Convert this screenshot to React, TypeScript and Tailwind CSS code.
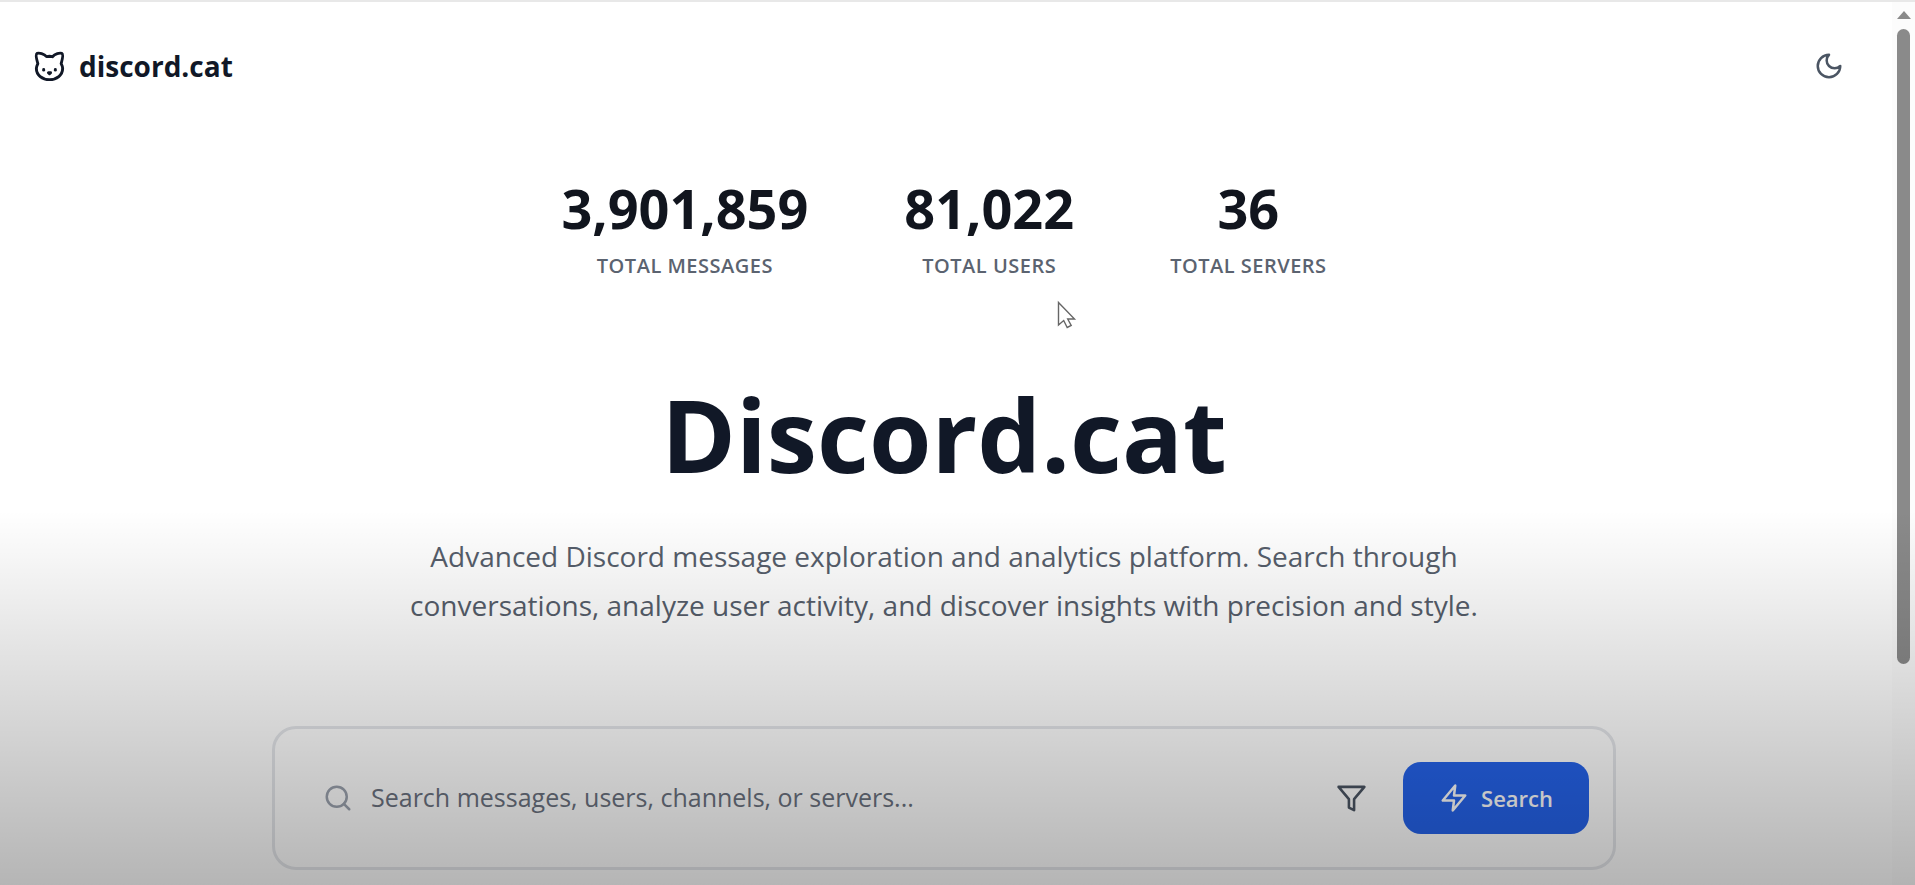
import type { ReactNode } from "react";
import { Cat, Search } from "lucide-react";

const stats = [
  { value: "3,901,859", label: "TOTAL MESSAGES" },
  { value: "81,022", label: "TOTAL USERS" },
  { value: "36", label: "TOTAL SERVERS" },
];

function Icon({ size, children }: { size: number; children: ReactNode }) {
  return (
    <svg
      aria-hidden="true"
      width={size}
      height={size}
      viewBox="0 0 24 24"
      fill="none"
      stroke="currentColor"
      strokeWidth="2"
      strokeLinecap="round"
      strokeLinejoin="round"
    >
      {children}
    </svg>
  );
}

function Header() {
  return (
    <header className="flex h-32 items-center justify-between pl-8 pr-12">
      <a href="#" className="flex items-center gap-3 text-[#111827]">
        <Cat size={35} />
        <span className="text-[28px] font-bold leading-10">discord.cat</span>
      </a>
      <button type="button" aria-label="Switch to dark mode" className="p-0 text-[#4b5563]">
        <Icon size={30}>
          <path d="M12 3a6 6 0 0 0 9 9 9 9 0 1 1-9-9Z" />
        </Icon>
      </button>
    </header>
  );
}

function SearchBar() {
  return (
    <form
      className="mt-24 flex w-full max-w-[1344px] items-center rounded-3xl border-[3px] border-[#e5e7eb] py-[33px] pl-12 pr-6"
      onSubmit={(e) => e.preventDefault()}
    >
      <Search size={30} className="shrink-0 text-[#9ca3af]" />
      <input
        type="text"
        aria-label="Search"
        placeholder="Search messages, users, channels, or servers..."
        className="ml-[18px] min-w-0 flex-1 bg-transparent text-[25px] text-[#111827] outline-none placeholder:text-[#6b7280]"
      />
      <button type="button" aria-label="Filters" className="mr-9 text-[#4b5563]">
        <Icon size={31}>
          <path d="M22 3H2l8 9.460V19l4 2v-8.540L22 3Z" />
        </Icon>
      </button>
      <button
        type="submit"
        className="flex h-[72px] items-center gap-3 rounded-[18px] bg-[#2563eb] px-9 text-[22px] font-semibold text-white"
      >
        <Icon size={30}>
          <path d="M13 2 3 14h9l-1 8 10-12h-9l1-8Z" />
        </Icon>
        Search
      </button>
    </form>
  );
}

function Scrollbar() {
  return (
    <div aria-hidden="true" className="flex w-[23px] shrink-0 flex-col items-center gap-2 bg-[#fcfcfc] pt-2">
      <svg width="16" height="11" viewBox="0 0 16 11">
        <path d="M8 1 15 9H1Z" fill="#8a8a8a" />
      </svg>
      <div className="h-[635px] w-[13px] rounded-full bg-[#8a8a8a]" />
    </div>
  );
}

export default function App() {
  return (
    <div className="relative flex min-h-screen border-t-2 border-[#e8e8e8] bg-white font-['Open_Sans',sans-serif]">
      <div className="min-w-0 flex-1">
        <Header />
        <main className="flex flex-col items-center pb-3 pl-8 pr-9">
          <dl className="mt-[46px] flex gap-24 text-center">
            {stats.map((s) => (
              <div key={s.label} className="flex flex-col-reverse items-center">
                <dt className="mt-3 text-[20px] font-semibold leading-7 tracking-wide text-[#5b6370]">{s.label}</dt>
                <dd className="text-[54px] font-bold leading-[64px] text-[#11151e]">{s.value}</dd>
              </div>
            ))}
          </dl>
          <h1 className="mt-[94px] text-[101px] font-bold leading-[120px] text-[#111827]">Discord.cat</h1>
          <p className="mt-[38px] max-w-[1120px] text-center text-[28px] leading-[49px] text-[#565e6b]">
            Advanced Discord message exploration and analytics platform. Search through conversations, analyze user
            activity, and discover insights with precision and style.
          </p>
          <SearchBar />
        </main>
      </div>
      <Scrollbar />
      <div className="pointer-events-none absolute inset-x-0 bottom-0 h-[375px] bg-linear-to-b from-black/0 to-black/29" />
      <svg
        aria-hidden="true"
        className="pointer-events-none absolute left-[1057px] top-[298px]"
        width="21"
        height="31"
        viewBox="0 0 21 31"
      >
        <path d="M1.500 2.500V25l5.200-4.500 3.500 7 4-2-3.500-6.500h6.800Z" fill="#fff" stroke="#666" strokeWidth="1.400" />
      </svg>
    </div>
  );
}
